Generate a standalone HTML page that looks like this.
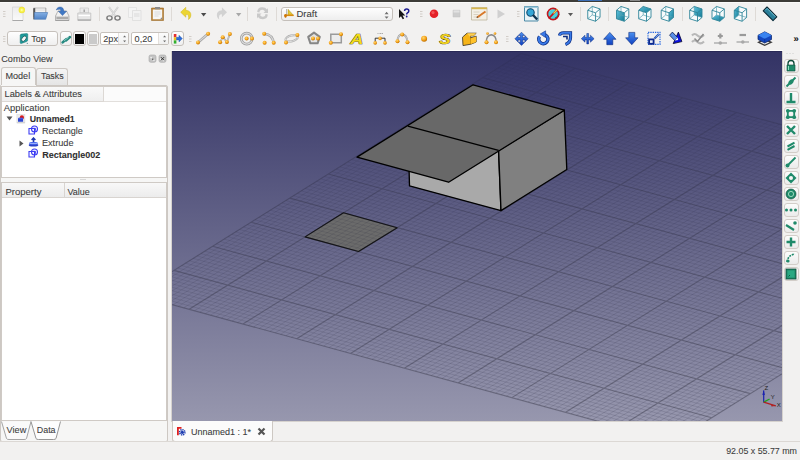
<!DOCTYPE html>
<html><head><meta charset="utf-8">
<style>
*{box-sizing:border-box}
html,body{margin:0;padding:0;width:800px;height:460px;overflow:hidden;background:#f2f1f0;font-family:"Liberation Sans",sans-serif;color:#3c3c3c;position:relative}
.a{position:absolute;display:block}
.t{position:absolute;white-space:nowrap;-webkit-text-stroke:0.08px currentColor}
</style></head><body>
<div class="a" style="left:0;top:0;width:800px;height:2px;background:#3c3b37"></div>
<div class="a" style="left:578px;top:0;width:24px;height:1px;background:#3d6fb6"></div>
<div class="a" style="left:630px;top:0;width:10px;height:1px;background:#8a8a8a"></div>
<div class="a" style="left:0px;top:2px;width:800px;height:1px;background:#fafaf9"></div>
<div class="a" style="left:281px;top:7px;width:112px;height:14px;border:1px solid #c4bfba;border-radius:3px;background:linear-gradient(#fefefe,#eeeeee)"></div>
<div class="t" style="left:296.50px;top:9.16px;font-size:9.5px;line-height:9.5px;font-weight:400;color:#3c3c3c;">Draft</div>
<div class="a" style="left:7px;top:31px;width:51px;height:15px;border:1px solid #c6c1bc;border-radius:3px;background:linear-gradient(#fefefe,#efefef)"></div>
<div class="t" style="left:31.20px;top:34.50px;font-size:9.1px;line-height:9.1px;font-weight:400;color:#3c3c3c;">Top</div>
<div class="a" style="left:60px;top:31px;width:12px;height:15px;border:1px solid #c6c1bc;border-radius:3px;background:linear-gradient(#fefefe,#efefef)"></div>
<div class="a" style="left:73px;top:31px;width:13px;height:15px;border:1px solid #c6c1bc;border-radius:3px;background:linear-gradient(#fefefe,#efefef)"></div>
<div class="a" style="left:75px;top:34px;width:9px;height:10px;background:#000"></div>
<div class="a" style="left:87px;top:31px;width:12px;height:15px;border:1px solid #c6c1bc;border-radius:3px;background:linear-gradient(#fefefe,#efefef)"></div>
<div class="a" style="left:89px;top:34px;width:8px;height:10px;background:#cacaca"></div>
<div class="a" style="left:100px;top:32px;width:29px;height:13px;border:1px solid #c6c1bc;border-radius:2px;background:#fff"></div>
<div class="a" style="left:119px;top:33px;width:9px;height:11px;background:linear-gradient(#fcfcfc,#f0f0f0)"></div>
<div class="t" style="left:103.30px;top:34.50px;font-size:9.1px;line-height:9.1px;font-weight:400;color:#3c3c3c;">2px</div>
<div class="a" style="left:131px;top:32px;width:38px;height:13px;border:1px solid #c6c1bc;border-radius:2px;background:#fff"></div>
<div class="a" style="left:159px;top:33px;width:9px;height:11px;background:linear-gradient(#fcfcfc,#f0f0f0)"></div>
<div class="t" style="left:134.60px;top:34.50px;font-size:9.1px;line-height:9.1px;font-weight:400;color:#3c3c3c;">0,20</div>
<div class="a" style="left:171px;top:31px;width:13px;height:15px;border:1px solid #c6c1bc;border-radius:3px;background:linear-gradient(#fefefe,#efefef)"></div>
<div class="t" style="left:793.60px;top:33.56px;font-size:9.5px;line-height:9.5px;font-weight:700;color:#111;">»</div>
<svg class="a" style="left:0;top:0" width="800" height="51" viewBox="0 0 800 51"><path d="M3 11.5h2.5" stroke="#d2cdc8" stroke-width="1"/><path d="M3 14.0h2.5" stroke="#d2cdc8" stroke-width="1"/><path d="M3 16.5h2.5" stroke="#d2cdc8" stroke-width="1"/><defs><linearGradient id="pg" x1="0" y1="0" x2="0" y2="1"><stop offset="0" stop-color="#ececec"/><stop offset="1" stop-color="#fafafa"/></linearGradient><radialGradient id="sun"><stop offset="0" stop-color="#ffffe0"/><stop offset="0.35" stop-color="#fafa60"/><stop offset="1" stop-color="#f0e020" stop-opacity="0.9"/></radialGradient><linearGradient id="blu" x1="0" y1="0" x2="0" y2="1"><stop offset="0" stop-color="#84b0e4"/><stop offset="1" stop-color="#4f82c6"/></linearGradient><linearGradient id="tl" x1="0" y1="0" x2="1" y2="1"><stop offset="0" stop-color="#5cc0dc"/><stop offset="1" stop-color="#137a94"/></linearGradient><linearGradient id="ab" x1="0" y1="0" x2="0" y2="1"><stop offset="0" stop-color="#4a90f0"/><stop offset="1" stop-color="#1040c0"/></linearGradient></defs><path d="M12.5 7h10.5v13.5H12.5z" fill="url(#pg)" stroke="#d6d6d6" stroke-width="0.8"/><path d="M12.5 20.5h10.5" stroke="#a8a8a8" stroke-width="1"/><circle cx="21.8" cy="10" r="3.2" fill="url(#sun)"/><path d="M33.5 8h12.5v9h-12.5z" fill="#c8c8c8" stroke="#9a9a9a" stroke-width="0.6"/><path d="M33.3 8.5l1.7 -0.5v11l-1.7 0.5z" fill="#555"/><path d="M36 8.5h9v4h-9z" fill="#f2f2f2"/><path d="M36 10h9" stroke="#d0d0d0" stroke-width="0.6"/><path d="M34.5 12.5h13.2l-2 6.8h-11.4z" fill="url(#blu)" stroke="#4a78b4" stroke-width="0.6"/><path d="M55.5 16l2.5-5h8.5l2.5 5v4.5h-13.5z" fill="#d6d6d6" stroke="#a0a0a0" stroke-width="0.7"/><path d="M58 12h8.5l1.8 4H56.3z" fill="#f0f0f0"/><path d="M56.5 18h11.5" stroke="#777" stroke-width="0.9"/><path d="M55.5 20.5h13.5" stroke="#999" stroke-width="0.8"/><path d="M56.2 10Q57.5 6.3 61.5 7.2Q63.6 7.8 63.9 11.3h2.7l-4.1 4.3l-4.1-4.3h2.5Q60.8 9.3 59.5 9.3Q57.5 9.3 56.2 10z" fill="#3f78c4" stroke="#2a5aa0" stroke-width="0.4"/><path d="M80 8h8.5v5h-8.5z" fill="#eaeaea" stroke="#c8c8c8" stroke-width="0.7"/><path d="M84.2 9.5v2.5" stroke="#a0a0a0" stroke-width="1.4"/><path d="M77.8 13h13v7.3h-13z" fill="#e6e6e6" stroke="#bdbdbd" stroke-width="0.7"/><path d="M78.5 15.5h11.5" stroke="#fff" stroke-width="1.2"/><path d="M77.8 20h13" stroke="#9a9a9a" stroke-width="1"/><path d="M99.5 7V21" stroke="#dedad6" stroke-width="1"/><path d="M109 7l6 8.5M118 7l-6 8.5" stroke="#c8c8c8" stroke-width="1.8"/><path d="M109 7l6 8.5M118 7l-6 8.5" stroke="#eee" stroke-width="0.6"/><ellipse cx="109.5" cy="18" rx="2.6" ry="2.1" fill="none" stroke="#7a7a7a" stroke-width="1.4"/><ellipse cx="117.5" cy="18" rx="2.6" ry="2.1" fill="none" stroke="#7a7a7a" stroke-width="1.4"/><path d="M128.5 7.5h8v10h-8z" fill="#f4f4f4" stroke="#e0e0e0" stroke-width="0.8"/><path d="M132.5 10.5h8.5v10h-8.5z" fill="#f2f2f2" stroke="#dcdcdc" stroke-width="0.8"/><path d="M134 13h5.5v4h-5.5z" fill="#e6e6e6"/><path d="M151.5 8h12v12.5h-12z" fill="#b8833a" stroke="#9c6c28" stroke-width="0.6"/><path d="M152.8 9.5h9.4v9.8h-9.4z" fill="#f6f6f6"/><path d="M155 7h5v2.3h-5z" fill="#8a8a8a" rx="1"/><path d="M154.5 12h6M154.5 14h6M154.5 16h4" stroke="#d4d4d4" stroke-width="0.8"/><path d="M160 19.3l2.2-2.2v2.2z" fill="#888"/><path d="M171.5 7V21" stroke="#dedad6" stroke-width="1"/><path d="M180.7 12.2L185.8 7.3V10.3Q191.5 10.8 190.8 16Q190.3 18.5 188.5 19.5Q189.5 14.2 185.8 14.3V17.2z" fill="#ecd532" stroke="#d0b418" stroke-width="0.5"/><path d="M201 13h5.3l-2.65 3.5z" fill="#4a4a4a"/><path d="M227 12.2L221.9 7.3V10.3Q216.2 10.8 216.9 16Q217.4 18.5 219.2 19.5Q218.2 14.2 221.9 14.3V17.2z" fill="#d2d2d2"/><path d="M236 13h5.3l-2.65 3.5z" fill="#a8a8a8"/><path d="M247.5 7V21" stroke="#dedad6" stroke-width="1"/><path d="M257.2 12Q257.5 7.5 262 7.3Q265.5 7.2 267 9.5l1-1.5v5h-4.5l1.5-1.5Q264 9.7 262.2 9.8Q259.5 10 259.5 12.5z" fill="#c9c9c9"/><path d="M267.8 14.5Q267.5 19 263 19.2Q259.5 19.3 258 17l-1 1.5v-5h4.5l-1.5 1.5Q261 16.8 262.8 16.7Q265.5 16.5 265.5 14z" fill="#c9c9c9"/><path d="M276.5 7V21" stroke="#dedad6" stroke-width="1"/><path d="M286.5 9v7" stroke="#aaa" stroke-width="0.8"/><path d="M288 9.2L293.6 15.5H288z" fill="#e2c838" stroke="#9a8010" stroke-width="0.4"/><path d="M285 15.3h8.5" stroke="#d88a10" stroke-width="1.6"/><circle cx="285.5" cy="15.5" r="1.5" fill="#d07a08"/><path d="M285.5 15.5v2.2" stroke="#c87008" stroke-width="1.5"/><path d="M384.6 14.2l2-2.4l2 2.4zM384.6 16.4l2 2.4l2-2.4z" fill="#707070"/><path d="M399 9v9l2-1.8l1.7 3l1.5-0.8l-1.7-3h2.8z" fill="#151515"/><path d="M404.6 11Q404.6 9.1 406.7 9.1Q408.8 9.1 408.8 11Q408.8 12.3 407.3 13Q406.7 13.4 406.7 14.6" stroke="#1c1c90" stroke-width="1.5" fill="none"/><circle cx="406.7" cy="16.5" r="0.9" fill="#1c1c90"/><path d="M420 11.5h2.5" stroke="#d2cdc8" stroke-width="1"/><path d="M420 14.0h2.5" stroke="#d2cdc8" stroke-width="1"/><path d="M420 16.5h2.5" stroke="#d2cdc8" stroke-width="1"/><circle cx="434" cy="13.8" r="4.3" fill="#e42228"/><circle cx="433" cy="12.6" r="1.6" fill="#f77" opacity="0.6"/><path d="M453 10.2h7v6.8h-7z" fill="#cdcdcd" stroke="#c0c0c0" stroke-width="0.5"/><path d="M453.5 10.5h6v2h-6z" fill="#e2e2e2"/><path d="M471.5 7.5h15.5v12.5h-15.5z" fill="#f3f0e6" stroke="#b8ae90" stroke-width="0.7"/><path d="M471.5 7.5h15.5v1.7h-15.5z" fill="#d8b850"/><path d="M473.5 12h6M473.5 14.5h5M473.5 17h7" stroke="#d2cab8" stroke-width="0.8"/><path d="M477 17.5L485.5 11.5" stroke="#d87828" stroke-width="1.9"/><path d="M476.3 18l1-1.8l0.9 1.1z" fill="#444"/><path d="M497.5 9.5L505 14L497.5 18.5z" fill="#d0d0d0"/><path d="M517 11.5h2.5" stroke="#d2cdc8" stroke-width="1"/><path d="M517 14.0h2.5" stroke="#d2cdc8" stroke-width="1"/><path d="M517 16.5h2.5" stroke="#d2cdc8" stroke-width="1"/><path d="M524.5 6.5h13.5v14.5h-13.5z" fill="#e8f2f6" stroke="#4a8aa6" stroke-width="1"/><path d="M524.5 6.5h13.5v1.5h-13.5z" fill="#9cc8da"/><circle cx="530.5" cy="12.5" r="3.7" fill="#35a6d6" stroke="#0f4a70" stroke-width="1.1"/><path d="M533 15l4.2 4.5" stroke="#0f3450" stroke-width="2.4"/><circle cx="553.1" cy="14" r="5.6" fill="#48d0dc"/><path d="M548 12Q550 8.5 553.5 8.6" stroke="#b8f0f4" stroke-width="1.5" fill="none"/><path d="M555 18.5Q558.5 17 558.8 14" stroke="#0e6470" stroke-width="1.4" fill="none"/><circle cx="553.1" cy="14" r="5.6" fill="none" stroke="#c4161c" stroke-width="1.6"/><path d="M557.2 9.6L548.8 18.4" stroke="#c4161c" stroke-width="1.6"/><path d="M557.5 9.3L553.5 13.5" stroke="#f0e040" stroke-width="1.1"/><path d="M568 13h5l-2.5 3.3z" fill="#5a5a5a"/><path d="M580.5 7V21" stroke="#dedad6" stroke-width="1"/><polygon points="587.75,10.25 592.25,6.45 600.05,8.95 600.05,17.45 595.55,21.25 587.75,18.75" fill="#f8fbfc"/><polyline points="592.25,6.45 592.25,14.95 587.75,18.75" fill="none" stroke="#5aa0b0" stroke-width="0.7"/><polyline points="592.25,14.95 600.05,17.45" fill="none" stroke="#5aa0b0" stroke-width="0.7"/><polygon points="587.75,10.25 592.25,6.45 600.05,8.95 600.05,17.45 595.55,21.25 587.75,18.75" fill="none" stroke="#2f8598" stroke-width="0.9" stroke-linejoin="round"/><polyline points="587.75,10.25 595.55,12.75 600.05,8.95" fill="none" stroke="#2f8598" stroke-width="0.9"/><polyline points="595.55,12.75 595.55,21.25" fill="none" stroke="#2f8598" stroke-width="0.9"/><path d="M608.5 7V21" stroke="#dedad6" stroke-width="1"/><polygon points="616.50,10.25 621.00,6.45 628.80,8.95 628.80,17.45 624.30,21.25 616.50,18.75" fill="#f8fbfc"/><polygon points="616.50,10.25 624.30,12.75 624.30,21.25 616.50,18.75" fill="url(#tl)"/><polyline points="621.00,6.45 621.00,14.95 616.50,18.75" fill="none" stroke="#5aa0b0" stroke-width="0.7"/><polyline points="621.00,14.95 628.80,17.45" fill="none" stroke="#5aa0b0" stroke-width="0.7"/><polygon points="616.50,10.25 621.00,6.45 628.80,8.95 628.80,17.45 624.30,21.25 616.50,18.75" fill="none" stroke="#2f8598" stroke-width="0.9" stroke-linejoin="round"/><polyline points="616.50,10.25 624.30,12.75 628.80,8.95" fill="none" stroke="#2f8598" stroke-width="0.9"/><polyline points="624.30,12.75 624.30,21.25" fill="none" stroke="#2f8598" stroke-width="0.9"/><polygon points="638.70,10.25 643.20,6.45 651.00,8.95 651.00,17.45 646.50,21.25 638.70,18.75" fill="#f8fbfc"/><polygon points="638.70,10.25 643.20,6.45 651.00,8.95 646.50,12.75" fill="url(#tl)"/><polyline points="643.20,6.45 643.20,14.95 638.70,18.75" fill="none" stroke="#5aa0b0" stroke-width="0.7"/><polyline points="643.20,14.95 651.00,17.45" fill="none" stroke="#5aa0b0" stroke-width="0.7"/><polygon points="638.70,10.25 643.20,6.45 651.00,8.95 651.00,17.45 646.50,21.25 638.70,18.75" fill="none" stroke="#2f8598" stroke-width="0.9" stroke-linejoin="round"/><polyline points="638.70,10.25 646.50,12.75 651.00,8.95" fill="none" stroke="#2f8598" stroke-width="0.9"/><polyline points="646.50,12.75 646.50,21.25" fill="none" stroke="#2f8598" stroke-width="0.9"/><polygon points="661.20,10.25 665.70,6.45 673.50,8.95 673.50,17.45 669.00,21.25 661.20,18.75" fill="#f8fbfc"/><polygon points="669.00,12.75 673.50,8.95 673.50,17.45 669.00,21.25" fill="url(#tl)"/><polyline points="665.70,6.45 665.70,14.95 661.20,18.75" fill="none" stroke="#5aa0b0" stroke-width="0.7"/><polyline points="665.70,14.95 673.50,17.45" fill="none" stroke="#5aa0b0" stroke-width="0.7"/><polygon points="661.20,10.25 665.70,6.45 673.50,8.95 673.50,17.45 669.00,21.25 661.20,18.75" fill="none" stroke="#2f8598" stroke-width="0.9" stroke-linejoin="round"/><polyline points="661.20,10.25 669.00,12.75 673.50,8.95" fill="none" stroke="#2f8598" stroke-width="0.9"/><polyline points="669.00,12.75 669.00,21.25" fill="none" stroke="#2f8598" stroke-width="0.9"/><path d="M682.5 7V21" stroke="#dedad6" stroke-width="1"/><polygon points="689.70,10.25 694.20,6.45 702.00,8.95 702.00,17.45 697.50,21.25 689.70,18.75" fill="#f8fbfc"/><polygon points="694.20,6.45 702.00,8.95 702.00,17.45 694.20,14.95" fill="url(#tl)"/><polyline points="694.20,6.45 694.20,14.95 689.70,18.75" fill="none" stroke="#5aa0b0" stroke-width="0.7"/><polyline points="694.20,14.95 702.00,17.45" fill="none" stroke="#5aa0b0" stroke-width="0.7"/><polygon points="689.70,10.25 694.20,6.45 702.00,8.95 702.00,17.45 697.50,21.25 689.70,18.75" fill="none" stroke="#2f8598" stroke-width="0.9" stroke-linejoin="round"/><polyline points="689.70,10.25 697.50,12.75 702.00,8.95" fill="none" stroke="#2f8598" stroke-width="0.9"/><polyline points="697.50,12.75 697.50,21.25" fill="none" stroke="#2f8598" stroke-width="0.9"/><polygon points="712.00,10.25 716.50,6.45 724.30,8.95 724.30,17.45 719.80,21.25 712.00,18.75" fill="#f8fbfc"/><polygon points="712.00,18.75 716.50,14.95 724.30,17.45 719.80,21.25" fill="url(#tl)"/><polyline points="716.50,6.45 716.50,14.95 712.00,18.75" fill="none" stroke="#5aa0b0" stroke-width="0.7"/><polyline points="716.50,14.95 724.30,17.45" fill="none" stroke="#5aa0b0" stroke-width="0.7"/><polygon points="712.00,10.25 716.50,6.45 724.30,8.95 724.30,17.45 719.80,21.25 712.00,18.75" fill="none" stroke="#2f8598" stroke-width="0.9" stroke-linejoin="round"/><polyline points="712.00,10.25 719.80,12.75 724.30,8.95" fill="none" stroke="#2f8598" stroke-width="0.9"/><polyline points="719.80,12.75 719.80,21.25" fill="none" stroke="#2f8598" stroke-width="0.9"/><polygon points="734.30,10.25 738.80,6.45 746.60,8.95 746.60,17.45 742.10,21.25 734.30,18.75" fill="#f8fbfc"/><polygon points="734.30,10.25 738.80,6.45 738.80,14.95 734.30,18.75" fill="url(#tl)"/><polyline points="738.80,6.45 738.80,14.95 734.30,18.75" fill="none" stroke="#5aa0b0" stroke-width="0.7"/><polyline points="738.80,14.95 746.60,17.45" fill="none" stroke="#5aa0b0" stroke-width="0.7"/><polygon points="734.30,10.25 738.80,6.45 746.60,8.95 746.60,17.45 742.10,21.25 734.30,18.75" fill="none" stroke="#2f8598" stroke-width="0.9" stroke-linejoin="round"/><polyline points="734.30,10.25 742.10,12.75 746.60,8.95" fill="none" stroke="#2f8598" stroke-width="0.9"/><polyline points="742.10,12.75 742.10,21.25" fill="none" stroke="#2f8598" stroke-width="0.9"/><path d="M755.5 7V21" stroke="#dedad6" stroke-width="1"/><path d="M763.2 10.8L767 7L776.8 16.8L773 20.6z" fill="#2a7e98" stroke="#0f2a36" stroke-width="1.1" stroke-linejoin="round"/><path d="M765.3 10.2L767.1 8.4L775.4 16.7" stroke="#7ccde0" stroke-width="0.9" fill="none"/><path d="M766 13.5l7.5 7" stroke="#14485a" stroke-width="1"/><path d="M3 36.5h2.5" stroke="#d2cdc8" stroke-width="1"/><path d="M3 39.0h2.5" stroke="#d2cdc8" stroke-width="1"/><path d="M3 41.5h2.5" stroke="#d2cdc8" stroke-width="1"/><path d="M20.2 35.2Q20.5 34.2 21.5 34.1L26.8 33.6Q27.8 33.6 27.8 34.6L27.6 40.4Q27.4 41.2 26.6 41.6L21.4 43.4Q20.2 43.7 20.2 42.6z" fill="#1e9c9c" stroke="#127070" stroke-width="0.5"/><ellipse cx="23.9" cy="38.7" rx="3.1" ry="1.9" transform="rotate(-50 23.9 38.7)" fill="#f4f8f8" stroke="#0a4a4a" stroke-width="0.7"/><circle cx="27.3" cy="43.3" r="0.6" fill="#4a8a8a"/><path d="M62.5 42.5L66.5 39M66 40.5L70 37" stroke="#278a80" stroke-width="2.4" stroke-linecap="round"/><path d="M64 40.8L68.5 37.5" stroke="#9ad8d0" stroke-width="0.8"/><path d="M118.5 33V44" stroke="#e4e0dc" stroke-width="1"/><path d="M123.1 37.2l1.5-1.6l1.5 1.6zM123.1 40.6l1.5 1.6l1.5-1.6z" fill="#6a6a6a"/><path d="M158.5 33V44" stroke="#e4e0dc" stroke-width="1"/><path d="M163.1 37.2l1.5-1.6l1.5 1.6zM163.1 40.6l1.5 1.6l1.5-1.6z" fill="#6a6a6a"/><rect x="173.8" y="34" width="2.6" height="3.2" fill="#e53030"/><rect x="173.8" y="37.2" width="2.6" height="3.2" fill="#f0c020"/><rect x="173.8" y="40.4" width="2.6" height="3.2" fill="#30b030"/><path d="M176.5 37.3h2.5v-2l3.3 3.3l-3.3 3.3v-2h-2.5z" fill="#2f6fd8" stroke="#1a4aa0" stroke-width="0.4"/><path d="M189 36.5h2.5" stroke="#d2cdc8" stroke-width="1"/><path d="M189 39.0h2.5" stroke="#d2cdc8" stroke-width="1"/><path d="M189 41.5h2.5" stroke="#d2cdc8" stroke-width="1"/><defs><radialGradient id="od" cx="0.4" cy="0.35" r="0.65"><stop offset="0" stop-color="#ffd870"/><stop offset="0.6" stop-color="#f5a31a"/><stop offset="1" stop-color="#c07000"/></radialGradient></defs><path d="M198 42.4L208.1 33.8" stroke="#a4a4a4" stroke-width="2.6" fill="none"/><path d="M198 42.4L208.1 33.8" stroke="#d6d6d6" stroke-width="1.1700000000000002" fill="none"/><circle cx="198" cy="42.4" r="2.0" fill="url(#od)"/><circle cx="208.1" cy="33.8" r="2.0" fill="url(#od)"/><path d="M220.1 42.2L222.75 37.2L226.9 41.9L229.9 34.1" stroke="#a4a4a4" stroke-width="1.6" fill="none"/><path d="M220.1 42.2L222.75 37.2L226.9 41.9L229.9 34.1" stroke="#d6d6d6" stroke-width="0.7200000000000001" fill="none"/><circle cx="220.1" cy="42.2" r="2.0" fill="url(#od)"/><circle cx="222.75" cy="37.2" r="2.0" fill="url(#od)"/><circle cx="226.9" cy="41.9" r="2.0" fill="url(#od)"/><circle cx="229.9" cy="34.1" r="2.0" fill="url(#od)"/><circle cx="246.75" cy="38.6" r="5.5" fill="none" stroke="#9c9c9c" stroke-width="2.6"/><circle cx="246.75" cy="38.6" r="5.5" fill="none" stroke="#dcdcdc" stroke-width="1.1"/><circle cx="246.6" cy="38.6" r="2.0" fill="url(#od)"/><circle cx="252" cy="38.6" r="2.0" fill="url(#od)"/><path d="M264.2 33.7Q272.5 34.5 273.7 42.8" stroke="#a4a4a4" stroke-width="2.6" fill="none"/><path d="M264.2 33.7Q272.5 34.5 273.7 42.8" stroke="#d6d6d6" stroke-width="1.1700000000000002" fill="none"/><circle cx="264.2" cy="33.7" r="2.0" fill="url(#od)"/><circle cx="264.6" cy="42.8" r="2.0" fill="url(#od)"/><circle cx="273.7" cy="42.8" r="2.0" fill="url(#od)"/><ellipse cx="291.6" cy="38.4" rx="6.3" ry="2.9" transform="rotate(-14 291.6 38.4)" fill="none" stroke="#a8a8a8" stroke-width="2"/><ellipse cx="291.6" cy="38.4" rx="6.3" ry="2.9" transform="rotate(-14 291.6 38.4)" fill="none" stroke="#eee" stroke-width="0.7"/><circle cx="286" cy="42.6" r="2.0" fill="url(#od)"/><circle cx="297.4" cy="35" r="2.0" fill="url(#od)"/><path d="M314 32.6L319.8 36.9L317.6 43.3H310.4L308.2 36.9z" fill="#e4e4e4" stroke="#868686" stroke-width="2" stroke-linejoin="round"/><circle cx="313" cy="38.4" r="2.0" fill="url(#od)"/><circle cx="318" cy="38.4" r="2.0" fill="url(#od)"/><path d="M330.8 34.3h10.5v8.5h-10.5z" fill="#ececec" stroke="#9a9a9a" stroke-width="1.5"/><circle cx="341" cy="34.2" r="2.0" fill="url(#od)"/><circle cx="330.8" cy="42.8" r="2.0" fill="url(#od)"/><text transform="translate(350.3 43.6) scale(1.28 1)" x="0" y="0" font-family="Liberation Sans" font-weight="700" font-style="italic" font-size="14" fill="#f2dc18" stroke="#3c3000" stroke-width="0.7" paint-order="stroke">A</text><path d="M375.2 38.2h9.8M375.2 38.2v4.5M385 38.2v4.5" stroke="#222" stroke-width="0.9"/><circle cx="375.2" cy="42.9" r="1.8" fill="url(#od)"/><circle cx="385" cy="42.9" r="1.8" fill="url(#od)"/><circle cx="380.1" cy="38.4" r="1.8" fill="url(#od)"/><path d="M377.5 33.5h1M379.5 33.5h2M382 33.5h1" stroke="#aaa" stroke-width="1.2"/><path d="M397.5 41Q397.8 34.5 402.2 34.5Q406.8 34.5 407.5 42" stroke="#a4a4a4" stroke-width="1.8" fill="none"/><path d="M397.5 41Q397.8 34.5 402.2 34.5Q406.8 34.5 407.5 42" stroke="#d6d6d6" stroke-width="0.81" fill="none"/><circle cx="397.5" cy="41.2" r="2.0" fill="url(#od)"/><circle cx="402.2" cy="34.5" r="2.0" fill="url(#od)"/><circle cx="407.5" cy="42.2" r="2.0" fill="url(#od)"/><circle cx="424.1" cy="38.7" r="3.0" fill="url(#od)"/><text transform="translate(439.3 43.6) scale(1.22 1)" x="0" y="0" font-family="Liberation Sans" font-weight="700" font-style="italic" font-size="13.8" fill="#f2d21a" stroke="#3c3000" stroke-width="0.7" paint-order="stroke">S</text><path d="M462.5 37.2L467 33.2H476.2L473.5 35.8H470.6V37.8L476.2 36.2V42L470.8 44.2L463 45.6z" fill="#f6b418" stroke="#3a3020" stroke-width="0.8" stroke-linejoin="round"/><path d="M467 33.2H476.2L473.5 35.8H470.6L470.5 37.5z" fill="#ffd050"/><path d="M470.6 35.8V44.2" stroke="#8a6010" stroke-width="0.5"/><path d="M470.8 38.4L476.2 36.6V42L470.8 44z" fill="#ffc22a"/><path d="M486.5 42.3Q486 35.5 491.3 34.8Q496.5 35.5 496 42.3" stroke="#8a8a8a" stroke-width="1.4" fill="none"/><circle cx="486.5" cy="42.3" r="2.0" fill="url(#od)"/><circle cx="496" cy="42.3" r="2.0" fill="url(#od)"/><circle cx="487.5" cy="33.5" r="1.3" fill="url(#od)"/><circle cx="495" cy="33.5" r="1.3" fill="url(#od)"/><path d="M506 36.5h2.5" stroke="#d2cdc8" stroke-width="1"/><path d="M506 39.0h2.5" stroke="#d2cdc8" stroke-width="1"/><path d="M506 41.5h2.5" stroke="#d2cdc8" stroke-width="1"/><path d="M521.5 32.2l3.2 3.2h-2v2.2h2.2v-2l3.2 3.2l-3.2 3.2v-2h-2.2v2.2h2l-3.2 3.2l-3.2-3.2h2v-2.2h-2.2v2l-3.2-3.2l3.2-3.2v2h2.2v-2.2h-2z" fill="url(#ab)" stroke="#0c2c80" stroke-width="0.5"/><path d="M539.5 36.5A4.6 4.6 0 1 0 543.5 34.5" stroke="#0c2c80" stroke-width="3.4" fill="none"/><path d="M539.5 36.5A4.6 4.6 0 1 0 543.5 34.5" stroke="#3a7ae8" stroke-width="2" fill="none"/><path d="M540.2 34L545.6 30.8L545.6 37.6z" fill="#3a7ae8" stroke="#0c2c80" stroke-width="0.5"/><path d="M559.5 35.5Q560 32.8 563.5 32.8H570.5V37.5Q570.5 42.5 565.5 44.5" stroke="#0c2c80" stroke-width="3.2" fill="none"/><path d="M559.5 35.5Q560 32.8 563.5 32.8H570.5V37.5Q570.5 42.5 565.5 44.5" stroke="#3a7ae8" stroke-width="1.8" fill="none"/><path d="M563 36.5h4v3" stroke="#0c2c80" stroke-width="1.6" fill="none"/><path d="M581.3 38.7L585 35.2v2.3h1.8v-4h1.8v4h1.8v-2.3l3.7 3.5l-3.7 3.5v-2.3h-1.8v4h-1.8v-4h-1.8v2.3z" fill="url(#ab)" stroke="#0c2c80" stroke-width="0.5"/><path d="M609.8 32.4L616 39.3H612.8V44.7H606.8V39.3H603.6z" fill="url(#ab)" stroke="#0c2c80" stroke-width="0.6"/><path d="M631.8 44.7L638 37.8H634.8V32.4H628.8V37.8H625.6z" fill="url(#ab)" stroke="#0c2c80" stroke-width="0.6"/><path d="M648 32.3h12v12h-12z" fill="none" stroke="#2a6ae0" stroke-width="1.2" stroke-dasharray="1.4 0.9"/><path d="M648.2 38.5h6.3v6.2h-6.3z" fill="#0d2a90"/><path d="M650 40.3h2.7v2.6H650z" fill="#e8ecf8"/><path d="M654.5 38.5L659 34" stroke="#2050b0" stroke-width="2.2"/><path d="M655.5 37.5L659 34" stroke="#90b0f0" stroke-width="0.8"/><path d="M678.4 32.1L681.9 41.6L673.2 43.6z" fill="#0a10e0" stroke="#05052a" stroke-width="0.8" stroke-linejoin="round"/><path d="M669.6 35.2L672.4 32.1L677.6 37.6L674.8 40.6z" fill="#5a90e8" stroke="#0a1a50" stroke-width="0.8" stroke-linejoin="round"/><path d="M674.8 40.6l2.8-3l0.6 2.3z" fill="#fff"/><path d="M692 35.5Q694.5 32.5 697.5 35.5Q700.5 38.5 704 35M692 42Q694.5 39 697.5 42Q700.5 45 704 41.5" stroke="#b8b8b8" stroke-width="2.1" fill="none"/><path d="M694.5 38.5l3 3l6-7.5" stroke="#8c8c8c" stroke-width="1.5" fill="none"/><path d="M720.3 33.5v5M717.8 36h5" stroke="#9a9a9a" stroke-width="2.2"/><path d="M714 43h13" stroke="#c0c0c0" stroke-width="2"/><circle cx="720.3" cy="43" r="1.8" fill="#a8a8a8"/><path d="M739.5 35h6.5" stroke="#9a9a9a" stroke-width="2.2"/><path d="M736.5 42h12.5" stroke="#c0c0c0" stroke-width="2"/><circle cx="742.8" cy="42" r="1.8" fill="#a8a8a8"/><path d="M758.5 42.3l6.2-3l6.5 3l-6.5 3z" fill="#e8e8e8" stroke="#3a3a3a" stroke-width="1.3"/><path d="M758 35.3L764.7 31.8L771.5 35.3V39.5L764.7 43L758 39.5z" fill="#1448c0" stroke="#0a2060" stroke-width="0.7"/><path d="M758 35.3L764.7 38.8L771.5 35.3L764.7 31.8z" fill="#3a84f0"/><path d="M764.7 38.8V43" stroke="#0a2a80" stroke-width="0.6"/></svg>
<div class="t" style="left:1.30px;top:55.30px;font-size:9.1px;line-height:9.1px;font-weight:400;color:#3c3c3c;">Combo View</div>
<svg class="a" style="left:148px;top:54px" width="9" height="9" viewBox="0 0 9 9"><rect x="1" y="1" width="7" height="7.3" rx="1.8" fill="#c4c4c4" stroke="#a4a4a4" stroke-width="0.6"/><path d="M2.6 3.2l1 0.8M5.2 5.6l1.2 0.9" stroke="#fff" stroke-width="1.1"/><circle cx="4.8" cy="5.2" r="0.7" fill="#444"/></svg>
<svg class="a" style="left:158px;top:54px" width="9" height="9" viewBox="0 0 9 9"><rect x="1" y="1" width="7" height="7.3" rx="1.8" fill="#c4c4c4" stroke="#a4a4a4" stroke-width="0.6"/><path d="M3 3.2l3 3M6 3.2l-3 3" stroke="#333" stroke-width="1"/><path d="M2.5 4.5v1.5M5.2 6.8h1" stroke="#fff" stroke-width="0.8"/></svg>
<div class="a" style="left:36px;top:68px;width:32px;height:18px;border:1px solid #cdc8c3;border-bottom:none;border-radius:3px 3px 0 0;background:linear-gradient(#f4f4f4,#e4e4e4)"></div>
<div class="a" style="left:1px;top:67px;width:35px;height:19px;border:1px solid #cdc8c3;border-bottom:none;border-radius:3px 3px 0 0;background:#f6f6f5"></div>
<div class="t" style="left:41.00px;top:72.47px;font-size:8.9px;line-height:8.9px;font-weight:400;color:#3c3c3c;">Tasks</div>
<div class="t" style="left:5.40px;top:72.00px;font-size:9.1px;line-height:9.1px;font-weight:400;color:#3c3c3c;">Model</div>
<div class="a" style="left:0px;top:85px;width:168px;height:357px;border:1px solid #cdc8c3;border-radius:0 2px 2px 2px;background:#f6f6f5"></div>
<div class="a" style="left:1px;top:85px;width:35px;height:2px;background:#f6f6f5"></div>
<div class="a" style="left:1px;top:86px;width:166px;height:92px;border:1px solid #cfcac5;background:#fff"></div>
<div class="a" style="left:2px;top:87px;width:164px;height:15px;border-bottom:1px solid #e2dfdc;background:#fbfbfb"></div>
<div class="a" style="left:2px;top:87px;width:102px;height:15px;border-right:1px solid #dcd8d4;border-bottom:1px solid #dcd8d4;background:linear-gradient(#f9f9f9,#efefef)"></div>
<div class="t" style="left:4.50px;top:90.33px;font-size:9.3px;line-height:9.3px;font-weight:400;color:#3c3c3c;">Labels &amp; Attributes</div>
<div class="t" style="left:3.80px;top:102.74px;font-size:9.4px;line-height:9.4px;font-weight:400;color:#3c3c3c;">Application</div>
<svg class="a" style="left:6px;top:116px" width="7" height="5" viewBox="0 0 7 5"><path d="M0.5 0.5h6L3.5 4.5z" fill="#555"/></svg>
<svg class="a" style="left:16px;top:114px" width="10" height="10" viewBox="0 0 10 10"><rect x="0.9" y="0" width="8" height="9" fill="#ececec" stroke="#d4d4d4" stroke-width="0.5"/><path d="M0.9 8.7h8" stroke="#c0c0c0" stroke-width="0.6"/><circle cx="5.9" cy="3.4" r="2.1" fill="#d81818"/><path d="M2 4.3L3 3.7H7.1V7.7H2z" fill="#2a44d0"/><path d="M2.2 4.3h4.9" stroke="#6a80f0" stroke-width="0.6"/></svg>
<div class="t" style="left:29.70px;top:115.05px;font-size:8.8px;line-height:8.8px;font-weight:700;color:#303030;">Unnamed1</div>
<svg class="a" style="left:28px;top:125px" width="11" height="10" viewBox="0 0 11 10"><path d="M1 3.5h5.5V9H1z" fill="#fff" stroke="#3c3cf2" stroke-width="1.1"/><circle cx="6.5" cy="4" r="3" fill="none" stroke="#3c3cf2" stroke-width="1.1"/><path d="M5 3.3h2.5v2.5" stroke="#3c3cf2" stroke-width="0.9" fill="none"/></svg>
<div class="t" style="left:41.90px;top:126.60px;font-size:9.1px;line-height:9.1px;font-weight:400;color:#3c3c3c;">Rectangle</div>
<svg class="a" style="left:19px;top:140px" width="5" height="7" viewBox="0 0 5 7"><path d="M0.5 0.5v6L4.5 3.5z" fill="#555"/></svg>
<svg class="a" style="left:28px;top:137px" width="11" height="10" viewBox="0 0 11 10"><ellipse cx="5.5" cy="8" rx="4.8" ry="1.6" fill="#2a40c8"/><ellipse cx="5.5" cy="6.3" rx="4.3" ry="1.5" fill="#4a6af0"/><path d="M2 6.5h7" stroke="#d0dcff" stroke-width="0.6"/><path d="M5.5 5V1.2M3.6 3l1.9-2l1.9 2" stroke="#2038b0" stroke-width="1.5" fill="none"/></svg>
<div class="t" style="left:41.90px;top:139.01px;font-size:9.2px;line-height:9.2px;font-weight:400;color:#3c3c3c;">Extrude</div>
<svg class="a" style="left:28px;top:148px" width="11" height="10" viewBox="0 0 11 10"><path d="M1 3.5h5.5V9H1z" fill="#fff" stroke="#3c3cf2" stroke-width="1.1"/><circle cx="6.5" cy="4" r="3" fill="none" stroke="#3c3cf2" stroke-width="1.1"/><path d="M5 3.3h2.5v2.5" stroke="#3c3cf2" stroke-width="0.9" fill="none"/></svg>
<div class="t" style="left:42.30px;top:150.58px;font-size:9px;line-height:9px;font-weight:700;color:#303030;">Rectangle002</div>
<svg class="a" style="left:80px;top:178px" width="7" height="3" viewBox="0 0 7 3"><path d="M0.5 1.5h1M2.5 1.5h1M4.5 1.5h1" stroke="#bbb"/></svg>
<div class="a" style="left:1px;top:182px;width:166px;height:239px;border:1px solid #cfcac5;background:#fff"></div>
<div class="a" style="left:2px;top:183px;width:164px;height:15px;border-bottom:1px solid #d8d4d0;background:linear-gradient(#f8f8f8,#ececec)"></div>
<div class="a" style="left:64px;top:183px;width:1px;height:15px;background:#d8d4d0"></div>
<div class="t" style="left:5.50px;top:187.16px;font-size:9.5px;line-height:9.5px;font-weight:400;color:#3c3c3c;">Property</div>
<div class="t" style="left:67.40px;top:187.58px;font-size:9px;line-height:9px;font-weight:400;color:#3c3c3c;">Value</div>
<svg class="a" style="left:0px;top:420px" width="64" height="22" viewBox="0 0 64 22"><path d="M1.5 1.5L6.5 18.5Q7 19.5 9 19.5H24Q26 19.5 26.5 18.5L31 1.5" fill="#fafafa" stroke="#9a9a9a" stroke-width="0.9"/><path d="M31 1.5L36 18.5Q36.5 19.5 38.5 19.5H53.5Q55.5 19.5 56 18.5L60.5 1.5" fill="#fdfdfd" stroke="#8a8a8a" stroke-width="0.9"/></svg>
<div class="t" style="left:6.60px;top:425.91px;font-size:9.2px;line-height:9.2px;font-weight:400;color:#3c3c3c;">View</div>
<div class="t" style="left:36.80px;top:426.17px;font-size:8.9px;line-height:8.9px;font-weight:400;color:#3c3c3c;">Data</div>
<div class="a" style="left:171px;top:50px;width:612px;height:372px;background:#d6d2ce;border-top:1px solid #fdfdfd"></div>
<div class="a" id="vp" style="left:172px;top:51px;width:610px;height:370px;background:linear-gradient(#333365,#9797ae);overflow:hidden"><svg width="610" height="370" viewBox="0 0 610 370" style="position:absolute;left:0;top:0"><polygon points="133.00,185.90 171.50,161.75 225.25,176.75 186.50,200.50" fill="#6b6b6b" stroke="#111" stroke-width="1.1" stroke-linejoin="round"/><defs><linearGradient id="gf" x1="0" y1="0" x2="0" y2="1"><stop offset="0" stop-color="#fff" stop-opacity="0.3"/><stop offset="0.4" stop-color="#fff" stop-opacity="0.8"/><stop offset="1" stop-color="#fff" stop-opacity="1"/></linearGradient><mask id="gm" maskUnits="userSpaceOnUse" x="0" y="0" width="610" height="370"><rect width="610" height="370" fill="url(#gf)"/></mask></defs><g mask="url(#gm)"><path d="M354.66 3.99L-31.24 244.99M345.42 4.93L883.22 152.23M360.04 5.47L-25.86 246.47M341.56 7.34L879.36 154.64M365.41 6.94L-20.49 247.94M337.70 9.75L875.50 157.05M370.79 8.41L-15.11 249.41M333.84 12.16L871.64 159.46M376.17 9.89L-9.73 250.88M329.98 14.57L867.78 161.87M381.55 11.36L-4.35 252.36M326.13 16.98L863.93 164.28M386.93 12.83L1.03 253.83M322.27 19.39L860.07 166.69M392.30 14.30L6.40 255.30M318.41 21.80L856.21 169.10M397.68 15.78L11.78 256.78M314.55 24.21L852.35 171.51M408.44 18.72L22.54 259.72M306.83 29.03L844.63 176.33M413.82 20.20L27.92 261.20M302.97 31.44L840.77 178.74M419.19 21.67L33.29 262.67M299.11 33.85L836.91 181.15M424.57 23.14L38.67 264.14M295.25 36.26L833.05 183.56M429.95 24.62L44.05 265.62M291.39 38.67L829.19 185.97M435.33 26.09L49.43 267.09M287.54 41.08L825.34 188.38M440.71 27.56L54.81 268.56M283.68 43.49L821.48 190.79M446.08 29.03L60.18 270.03M279.82 45.90L817.62 193.20M451.46 30.51L65.56 271.51M275.96 48.31L813.76 195.61M462.22 33.45L76.32 274.45M268.24 53.13L806.04 200.43M467.60 34.93L81.70 275.93M264.38 55.54L802.18 202.84M472.97 36.40L87.07 277.40M260.52 57.95L798.32 205.25M478.35 37.87L92.45 278.87M256.66 60.36L794.46 207.66M483.73 39.34L97.83 280.35M252.80 62.77L790.60 210.07M489.11 40.82L103.21 281.82M248.95 65.18L786.75 212.48M494.49 42.29L108.59 283.29M245.09 67.59L782.89 214.89M499.86 43.76L113.96 284.76M241.23 70.00L779.03 217.30M505.24 45.24L119.34 286.24M237.37 72.41L775.17 219.71M516.00 48.18L130.10 289.18M229.65 77.23L767.45 224.53M521.38 49.66L135.48 290.66M225.79 79.64L763.59 226.94M526.75 51.13L140.85 292.13M221.93 82.05L759.73 229.35M532.13 52.60L146.23 293.60M218.07 84.46L755.87 231.76M537.51 54.08L151.61 295.07M214.21 86.87L752.01 234.17M542.89 55.55L156.99 296.55M210.36 89.28L748.16 236.58M548.27 57.02L162.37 298.02M206.50 91.69L744.30 238.99M553.64 58.49L167.74 299.49M202.64 94.10L740.44 241.40M559.02 59.97L173.12 300.97M198.78 96.51L736.58 243.81M569.78 62.91L183.88 303.91M191.06 101.33L728.86 248.63M575.16 64.39L189.26 305.39M187.20 103.74L725.00 251.04M580.53 65.86L194.63 306.86M183.34 106.15L721.14 253.45M585.91 67.33L200.01 308.33M179.48 108.56L717.28 255.86M591.29 68.81L205.39 309.81M175.62 110.97L713.42 258.27M596.67 70.28L210.77 311.28M171.77 113.38L709.57 260.68M602.05 71.75L216.15 312.75M167.91 115.79L705.71 263.09M607.42 73.22L221.52 314.22M164.05 118.20L701.85 265.50M612.80 74.70L226.90 315.70M160.19 120.61L697.99 267.91M623.56 77.64L237.66 318.64M152.47 125.43L690.27 272.73M628.94 79.12L243.04 320.12M148.61 127.84L686.41 275.14M634.31 80.59L248.41 321.59M144.75 130.25L682.55 277.55M639.69 82.06L253.79 323.06M140.89 132.66L678.69 279.96M645.07 83.53L259.17 324.53M137.03 135.07L674.83 282.37M650.45 85.01L264.55 326.01M133.18 137.48L670.98 284.78M655.83 86.48L269.93 327.48M129.32 139.89L667.12 287.19M661.20 87.95L275.30 328.95M125.46 142.30L663.26 289.60M666.58 89.43L280.68 330.43M121.60 144.71L659.40 292.01M677.34 92.37L291.44 333.37M113.88 149.53L651.68 296.83M682.72 93.85L296.82 334.85M110.02 151.94L647.82 299.24M688.09 95.32L302.19 336.32M106.16 154.35L643.96 301.65M693.47 96.79L307.57 337.79M102.30 156.76L640.10 304.06M698.85 98.27L312.95 339.26M98.44 159.17L636.24 306.47M704.23 99.74L318.33 340.74M94.59 161.58L632.39 308.88M709.61 101.21L323.71 342.21M90.73 163.99L628.53 311.29M714.98 102.68L329.08 343.68M86.87 166.40L624.67 313.70M720.36 104.16L334.46 345.16M83.01 168.81L620.81 316.11M731.12 107.10L345.22 348.10M75.29 173.63L613.09 320.93M736.50 108.58L350.60 349.58M71.43 176.04L609.23 323.34M741.87 110.05L355.97 351.05M67.57 178.45L605.37 325.75M747.25 111.52L361.35 352.52M63.71 180.86L601.51 328.16M752.63 113.00L366.73 354.00M59.85 183.27L597.65 330.57M758.01 114.47L372.11 355.47M56.00 185.68L593.80 332.98M763.39 115.94L377.49 356.94M52.14 188.09L589.94 335.39M768.76 117.41L382.86 358.41M48.28 190.50L586.08 337.80M774.14 118.89L388.24 359.89M44.42 192.91L582.22 340.21M784.90 121.83L399.00 362.83M36.70 197.73L574.50 345.03M790.28 123.31L404.38 364.31M32.84 200.14L570.64 347.44M795.65 124.78L409.75 365.78M28.98 202.55L566.78 349.85M801.03 126.25L415.13 367.25M25.12 204.96L562.92 352.26M806.41 127.72L420.51 368.73M21.26 207.37L559.06 354.67M811.79 129.20L425.89 370.20M17.41 209.78L555.21 357.08M817.17 130.67L431.27 371.67M13.55 212.19L551.35 359.49M822.54 132.14L436.64 373.14M9.69 214.60L547.49 361.90M827.92 133.62L442.02 374.62M5.83 217.01L543.63 364.31M838.68 136.56L452.78 377.56M-1.89 221.83L535.91 369.13M844.06 138.04L458.16 379.04M-5.75 224.24L532.05 371.54M849.43 139.51L463.53 380.51M-9.61 226.65L528.19 373.95M854.81 140.98L468.91 381.98M-13.47 229.06L524.33 376.36M860.19 142.46L474.29 383.46M-17.33 231.47L520.47 378.77M865.57 143.93L479.67 384.93M-21.18 233.88L516.62 381.18M870.95 145.40L485.05 386.40M-25.04 236.29L512.76 383.59M876.32 146.87L490.42 387.87M-28.90 238.70L508.90 386.00M881.70 148.35L495.80 389.35M-32.76 241.11L505.04 388.41" stroke="rgba(30,30,50,0.17)" stroke-width="0.8" fill="none"/><path d="M349.28 2.52L-36.62 243.52M349.28 2.52L887.08 149.82M403.06 17.25L17.16 258.25M310.69 26.62L848.49 173.92M456.84 31.98L70.94 272.98M272.10 50.72L809.90 198.02M510.62 46.71L124.72 287.71M233.51 74.82L771.31 222.12M564.40 61.44L178.50 302.44M194.92 98.92L732.72 246.22M618.18 76.17L232.28 317.17M156.33 123.02L694.13 270.32M671.96 90.90L286.06 331.90M117.74 147.12L655.54 294.42M725.74 105.63L339.84 346.63M79.15 171.22L616.95 318.52M779.52 120.36L393.62 361.36M40.56 195.32L578.36 342.62M833.30 135.09L447.40 376.09M1.97 219.42L539.77 366.72M887.08 149.82L501.18 390.82M-36.62 243.52L501.18 390.82" stroke="rgba(30,30,45,0.36)" stroke-width="1.15" fill="none"/></g><polygon points="235.90,75.10 326.60,99.40 329.00,159.60 237.50,134.80" fill="#a9a9a9" stroke="#000" stroke-width="1.35" stroke-linejoin="round"/>
<polygon points="326.60,99.40 392.30,59.20 394.80,118.50 329.00,159.60" fill="#808080" stroke="#000" stroke-width="1.35" stroke-linejoin="round"/>
<polygon points="301.10,33.80 392.30,59.20 276.60,131.20 185.00,106.10" fill="#686868" stroke="#000" stroke-width="1.35" stroke-linejoin="round"/>
<polyline points="235.90,75.10 326.60,99.40" stroke="#000" stroke-width="1.35" fill="none"/></svg><div style="position:absolute;left:0;top:0;width:610px;height:1px;background:rgba(20,20,60,0.35)"></div></div>
<svg class="a" style="left:757px;top:381px" width="28" height="30" viewBox="0 0 28 30"><path d="M6.7 21.5V9.5" stroke="#1a22b0" stroke-width="1.2"/><path d="M5.4 14L6.6 9.2L7.9 14z" fill="#1a22b0"/><path d="M6.7 21.2L12.6 18" stroke="#20a020" stroke-width="1.4"/><path d="M6.7 21.2L18.8 24.8" stroke="#b02020" stroke-width="1.3"/><path d="M14 23.5l4.5 1.5l-4 0.5z" fill="#b02020"/><text x="7.6" y="9" font-family="Liberation Sans" font-size="6" fill="#222">Z</text><text x="13.8" y="18" font-family="Liberation Sans" font-size="6" fill="#222">Y</text><text x="19.8" y="25.6" font-family="Liberation Sans" font-size="6" fill="#222">X</text></svg>
<svg class="a" style="left:785px;top:52px" width="10" height="4" viewBox="0 0 10 4"><path d="M1.5 1.5h1M4.5 1.5h1M7.5 1.5h1" stroke="#ccc"/></svg>
<div class="a" style="left:784px;top:59px;width:15px;height:14px;border:1px solid #d2cdc8;border-radius:3px;background:linear-gradient(#fcfcfc,#ebebeb)"></div>
<svg class="a" style="left:784px;top:59px" width="15" height="14" viewBox="0 0 15 14"><path d="M4 6V4.5a3 3 0 0 1 6 0V6" stroke="#0d4a38" stroke-width="1.3" fill="none"/><path d="M3 6h8v6H3z" fill="#1f8a6a" stroke="#0d4a38" stroke-width="0.6"/><path d="M4.5 7v4" stroke="#8fe0c0" stroke-width="1"/></svg>
<div class="a" style="left:784px;top:75px;width:15px;height:14px;border:1px solid #d2cdc8;border-radius:3px;background:linear-gradient(#fcfcfc,#ebebeb)"></div>
<svg class="a" style="left:784px;top:75px" width="15" height="14" viewBox="0 0 15 14"><path d="M2.5 11.5L11.5 2.5" stroke="#1f8a6a" stroke-width="2"/><ellipse cx="7" cy="7" rx="3" ry="2" transform="rotate(-45 7 7)" fill="#1f8a6a"/></svg>
<div class="a" style="left:784px;top:91px;width:15px;height:14px;border:1px solid #d2cdc8;border-radius:3px;background:linear-gradient(#fcfcfc,#ebebeb)"></div>
<svg class="a" style="left:784px;top:91px" width="15" height="14" viewBox="0 0 15 14"><path d="M7 2v8M2.5 11h9" stroke="#1f8a6a" stroke-width="2.4"/></svg>
<div class="a" style="left:784px;top:107px;width:15px;height:14px;border:1px solid #d2cdc8;border-radius:3px;background:linear-gradient(#fcfcfc,#ebebeb)"></div>
<svg class="a" style="left:784px;top:107px" width="15" height="14" viewBox="0 0 15 14"><rect x="3.8" y="3.8" width="6.4" height="6.4" rx="1" fill="none" stroke="#1f8a6a" stroke-width="1.8"/><circle cx="3.8" cy="3.8" r="1.9" fill="#1f8a6a"/><circle cx="10.2" cy="3.8" r="1.9" fill="#1f8a6a"/><circle cx="3.8" cy="10.2" r="1.9" fill="#1f8a6a"/><circle cx="10.2" cy="10.2" r="1.9" fill="#1f8a6a"/></svg>
<div class="a" style="left:784px;top:123px;width:15px;height:14px;border:1px solid #d2cdc8;border-radius:3px;background:linear-gradient(#fcfcfc,#ebebeb)"></div>
<svg class="a" style="left:784px;top:123px" width="15" height="14" viewBox="0 0 15 14"><path d="M3 3l8 8M11 3l-8 8" stroke="#1f8a6a" stroke-width="2.4"/></svg>
<div class="a" style="left:784px;top:139px;width:15px;height:14px;border:1px solid #d2cdc8;border-radius:3px;background:linear-gradient(#fcfcfc,#ebebeb)"></div>
<svg class="a" style="left:784px;top:139px" width="15" height="14" viewBox="0 0 15 14"><path d="M3.5 7.5l7-3.8M3.5 10.8l7-3.8" stroke="#1f8a6a" stroke-width="2"/></svg>
<div class="a" style="left:784px;top:155px;width:15px;height:14px;border:1px solid #d2cdc8;border-radius:3px;background:linear-gradient(#fcfcfc,#ebebeb)"></div>
<svg class="a" style="left:784px;top:155px" width="15" height="14" viewBox="0 0 15 14"><path d="M2.5 11.5L11.5 2.5" stroke="#1f8a6a" stroke-width="1.8"/><circle cx="3.5" cy="10.5" r="2" fill="#1f8a6a"/></svg>
<div class="a" style="left:784px;top:171px;width:15px;height:14px;border:1px solid #d2cdc8;border-radius:3px;background:linear-gradient(#fcfcfc,#ebebeb)"></div>
<svg class="a" style="left:784px;top:171px" width="15" height="14" viewBox="0 0 15 14"><path d="M7 1.5L12.5 7L7 12.5L1.5 7z" fill="#1f8a6a"/><circle cx="7" cy="7" r="2" fill="#f5f5f5"/></svg>
<div class="a" style="left:784px;top:187px;width:15px;height:14px;border:1px solid #d2cdc8;border-radius:3px;background:linear-gradient(#fcfcfc,#ebebeb)"></div>
<svg class="a" style="left:784px;top:187px" width="15" height="14" viewBox="0 0 15 14"><circle cx="7" cy="7" r="5" fill="#1f8a6a" stroke="#0d4a38" stroke-width="0.6"/><circle cx="7" cy="7" r="2.6" fill="none" stroke="#9ad8bc" stroke-width="1"/></svg>
<div class="a" style="left:784px;top:203px;width:15px;height:14px;border:1px solid #d2cdc8;border-radius:3px;background:linear-gradient(#fcfcfc,#ebebeb)"></div>
<svg class="a" style="left:784px;top:203px" width="15" height="14" viewBox="0 0 15 14"><circle cx="2.5" cy="7" r="1.5" fill="#1f8a6a"/><circle cx="7" cy="7" r="1.5" fill="#1f8a6a"/><circle cx="11.5" cy="7" r="1.5" fill="#1f8a6a"/></svg>
<div class="a" style="left:784px;top:219px;width:15px;height:14px;border:1px solid #d2cdc8;border-radius:3px;background:linear-gradient(#fcfcfc,#ebebeb)"></div>
<svg class="a" style="left:784px;top:219px" width="15" height="14" viewBox="0 0 15 14"><path d="M2 6l8 5" stroke="#1f8a6a" stroke-width="2.2"/><circle cx="11" cy="4" r="1.8" fill="#1f8a6a"/></svg>
<div class="a" style="left:784px;top:235px;width:15px;height:14px;border:1px solid #d2cdc8;border-radius:3px;background:linear-gradient(#fcfcfc,#ebebeb)"></div>
<svg class="a" style="left:784px;top:235px" width="15" height="14" viewBox="0 0 15 14"><path d="M7 2.5v9M2.5 7h9" stroke="#1f8a6a" stroke-width="2.4"/></svg>
<div class="a" style="left:784px;top:251px;width:15px;height:14px;border:1px solid #d2cdc8;border-radius:3px;background:linear-gradient(#fcfcfc,#ebebeb)"></div>
<svg class="a" style="left:784px;top:251px" width="15" height="14" viewBox="0 0 15 14"><path d="M3 11Q4 4 11 3" stroke="#1f8a6a" stroke-width="1.6" fill="none" stroke-dasharray="2 1"/><circle cx="4" cy="10" r="1.6" fill="#1f8a6a"/></svg>
<div class="a" style="left:784px;top:267px;width:15px;height:14px;border:1px solid #d2cdc8;border-radius:3px;background:linear-gradient(#fcfcfc,#ebebeb)"></div>
<svg class="a" style="left:784px;top:267px" width="15" height="14" viewBox="0 0 15 14"><rect x="2" y="2" width="10" height="10" fill="#1f8a6a" stroke="#0d4a38" stroke-width="0.8"/><rect x="3.5" y="3.5" width="7" height="7" fill="#2aa882"/><path d="M4.5 9.5l1.5-1.5" stroke="#0d4a38" stroke-width="0.8"/></svg>
<div class="a" style="left:172px;top:421px;width:101px;height:21px;border:1px solid #cdc8c3;border-top:none;border-radius:0 0 3px 3px;background:#fbfbfb"></div>
<svg class="a" style="left:176px;top:426px" width="10" height="10" viewBox="0 0 10 10"><path d="M1 1h4.5v1.8H2.8v6.5H1z" fill="#e02020"/><circle cx="6.3" cy="6.3" r="2.6" fill="none" stroke="#1a3ab0" stroke-width="1.6" stroke-dasharray="1.2 0.8"/><circle cx="6.3" cy="6.3" r="1.6" fill="#1a3ab0"/></svg>
<div class="t" style="left:190.90px;top:427.58px;font-size:9px;line-height:9px;font-weight:400;color:#3c3c3c;">Unnamed1 : 1*</div>
<svg class="a" style="left:257px;top:427px" width="9" height="9" viewBox="0 0 9 9"><path d="M1.5 1.5l6 6M7.5 1.5l-6 6" stroke="#555" stroke-width="2.2"/></svg>
<div class="a" style="left:0px;top:441px;width:800px;height:1px;background:#dcd8d4"></div>
<div class="t" style="left:726.20px;top:446.91px;font-size:8.85px;line-height:8.85px;font-weight:400;color:#3c3c3c;">92.05 x 55.77 mm</div>
</body></html>
